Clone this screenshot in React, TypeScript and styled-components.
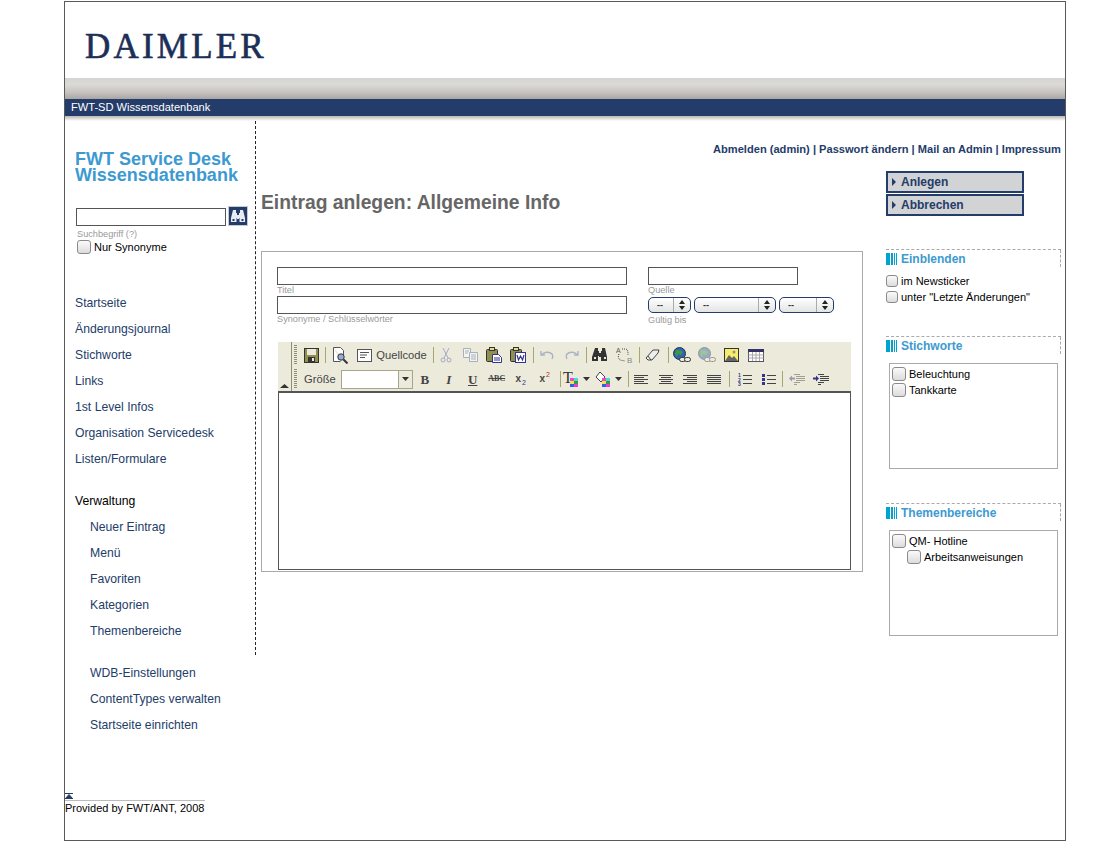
import styled, { createGlobalStyle } from 'styled-components';

const GlobalStyle = createGlobalStyle`
  html, body {
    margin: 0;
    padding: 0;
    background: #fff;
    font-family: "Liberation Sans", Arial, sans-serif;
  }
`;

const Frame = styled.div`
  box-sizing: border-box;
  width: 1002px;
  height: 840px;
  margin: 1px 0 0 64px;
  border: 1px solid #5a5a5a;
`;

const LogoBar = styled.div`
  height: 76px;
  padding: 0 0 0 20px;
  display: flex;
  align-items: center;
`;

const Logo = styled.div`
  font-family: "Liberation Serif", serif;
  font-size: 35px;
  letter-spacing: 3.2px;
  color: #1b2f57;
  line-height: 1;
  padding-top: 13px;
  -webkit-text-stroke: 0.6px #1b2f57;
`;

const GreyBand = styled.div`
  height: 21px;
  background: linear-gradient(#d6d4d0 0, #dcdad7 30%, #c6c3bf 70%, #a8a5a2 100%);
`;

const TitleBand = styled.div`
  height: 17px;
  padding-left: 6px;
  background: #243c69;
  color: #fff;
  font-size: 11.1px;
  line-height: 17px;
`;

const BandShadow = styled.div`
  height: 5px;
  background: linear-gradient(#b9b7b4, #fff);
`;

const Content = styled.div`
  display: flex;
  height: 672px;
`;

const Sidebar = styled.div`
  box-sizing: border-box;
  flex: none;
  width: 191px;
  height: 534px;
  border-right: 1px dashed #222;
  padding: 30px 0 0 10px;
`;

const Brand = styled.div`
  color: #3c9ad0;
  font-size: 18px;
  font-weight: bold;
  line-height: 16px;
`;

const SearchRow = styled.div`
  display: flex;
  align-items: flex-end;
  gap: 2px;
  margin: 23px 0 0 1px;
`;

const TextBox = styled.div<{ $w: number }>`
  box-sizing: border-box;
  width: ${p => p.$w}px;
  height: 18px;
  border: 1px solid #555;
  background: #fff;
`;

const SearchButton = styled.div`
  box-sizing: border-box;
  width: 20px;
  height: 20px;
  background: #243c69;
  border: 1px solid #c4c9d6;
  display: flex;
  align-items: center;
  justify-content: center;
`;

const Hint = styled.div`
  color: #9a9a9a;
  font-size: 9.2px;
  line-height: 11px;
`;

const SearchHint = styled(Hint)`
  margin: 3px 0 0 2px;
`;

const CheckRow = styled.div<{ $indent?: number }>`
  display: flex;
  align-items: center;
  gap: 3px;
  height: 16px;
  color: #000;
  font-size: 11px;
  margin-left: ${p => p.$indent ?? 0}px;
`;

const SideCheck = styled(CheckRow)`
  margin: -1px 0 0 2px;
`;

const Check = styled.span<{ $size?: number }>`
  box-sizing: border-box;
  flex: none;
  width: ${p => p.$size ?? 14}px;
  height: ${p => p.$size ?? 14}px;
  border: 1px solid #8a8a8a;
  border-radius: 3px;
  background: linear-gradient(#fafafa, #dcdcdc);
`;

const NavList = styled.div`
  margin-top: 35px;
  display: flex;
  flex-direction: column;
`;

const NavLink = styled.div<{ $sub?: boolean; $gap?: number; $black?: boolean }>`
  height: 26px;
  line-height: 26px;
  font-size: 12.2px;
  white-space: nowrap;
  color: ${p => (p.$black ? '#000' : '#243c69')};
  padding-left: ${p => (p.$sub ? 15 : 0)}px;
  margin-top: ${p => p.$gap ?? 0}px;
`;

const Main = styled.div`
  flex: 1;
  display: flex;
  flex-direction: column;
  padding: 0 4px 0 5px;
  min-width: 0;
`;

const TopLinks = styled.div`
  margin-top: 21px;
  height: 14px;
  text-align: right;
  color: #243c69;
  font-size: 11.1px;
  font-weight: bold;
  line-height: 14px;
  white-space: nowrap;
`;

const Columns = styled.div`
  display: flex;
  gap: 23px;
`;

const Center = styled.div`
  flex: none;
  width: 602px;
`;

const Heading = styled.h1`
  margin: 36px 0 0;
  height: 59px;
  color: #666;
  font-size: 19.3px;
  font-weight: bold;
  line-height: 22px;
  white-space: nowrap;
`;

const Card = styled.div`
  box-sizing: border-box;
  height: 321px;
  border: 1px solid #aaa;
  padding: 15px 11px 0 15px;
`;

const FormGrid = styled.div`
  display: flex;
  gap: 21px;
`;

const FormColumn = styled.div<{ $w: number }>`
  flex: none;
  width: ${p => p.$w}px;
`;

const FieldHint = styled(Hint)<{ $top?: number }>`
  height: 11px;
  line-height: 10px;
  margin-top: ${p => p.$top ?? 0}px;
`;

const SelectRow = styled.div`
  display: flex;
  gap: 3px;
  margin-top: 1px;
  height: 16px;
`;

const Select = styled.div<{ $w: number }>`
  box-sizing: border-box;
  width: ${p => p.$w}px;
  height: 16px;
  border: 1px solid #243c69;
  border-radius: 5px;
  background: linear-gradient(#fff, #e4e4e4);
  display: flex;
  align-items: center;
  font-size: 9px;
  font-weight: bold;
  color: #333;
`;

const SelectValue = styled.span`
  flex: 1;
  padding-left: 8px;
  line-height: 14px;
`;

const SelectArrows = styled.span`
  width: 16px;
  height: 14px;
  border-left: 1px solid #aaa;
  display: flex;
  align-items: center;
  justify-content: center;
`;

const Editor = styled.div`
  box-sizing: border-box;
  margin: 16px 0 0 1px;
  width: 573px;
  height: 228px;
  display: flex;
  flex-direction: column;
`;

const Toolbar = styled.div`
  flex: none;
  height: 49px;
  background: #ecebdb;
  display: flex;
`;

const Collapse = styled.div`
  flex: none;
  width: 13px;
  border-right: 1px solid #8f8f78;
  display: flex;
  align-items: flex-end;
  justify-content: center;
  padding-bottom: 3px;
  box-sizing: content-box;
`;

const ToolRows = styled.div`
  flex: 1;
  padding: 1px 0 0 2px;
`;

const ToolRow = styled.div`
  height: 24px;
  display: flex;
  align-items: center;
`;

const Grip = styled.span`
  flex: none;
  width: 3px;
  height: 20px;
  margin-right: 3px;
  background: repeating-linear-gradient(#8f8f78 0 1px, transparent 1px 2px);
`;

const Sep = styled.span`
  flex: none;
  width: 1px;
  height: 16px;
  margin-left: 3px;
  background: #a6a66f;
`;

const Tool = styled.span<{ $w?: number }>`
  flex: none;
  width: ${p => p.$w ?? 24}px;
  height: 20px;
  display: flex;
  align-items: center;
  justify-content: center;
  gap: 4px;
  color: #444;
  font-size: 11.2px;
`;

const ToolLabel = styled.span`
  color: #444;
  font-size: 11.2px;
  margin: 0 5px 0 4px;
  white-space: nowrap;
`;

const SizeCombo = styled.span`
  box-sizing: border-box;
  flex: none;
  width: 72px;
  height: 19px;
  border: 1px solid #a6a68c;
  background: #fff;
  display: flex;
  justify-content: flex-end;
`;

const SizeArrow = styled.span`
  width: 13px;
  background: #ecebdb;
  border-left: 1px solid #a6a68c;
  display: flex;
  align-items: center;
  justify-content: center;
`;

const Glyph = styled.span<{ $serif?: boolean; $italic?: boolean; $under?: boolean; $strike?: boolean; $size?: number }>`
  font-family: ${p => (p.$serif ? '"Liberation Serif", serif' : '"Liberation Sans", sans-serif')};
  font-style: ${p => (p.$italic ? 'italic' : 'normal')};
  font-weight: bold;
  font-size: ${p => p.$size ?? 12}px;
  color: #444;
  text-decoration: ${p => (p.$under ? 'underline' : p.$strike ? 'line-through' : 'none')};
  line-height: 1;
`;

const Script = styled.sup<{ $color: string; $low?: boolean }>`
  font-size: 7px;
  font-weight: normal;
  color: ${p => p.$color};
  line-height: 0;
  margin-left: 1px;
  vertical-align: ${p => (p.$low ? '-3px' : '5px')};
`;

const EditArea = styled.div`
  flex: 1;
  border: 1px solid #555;
  border-top-width: 2px;
  background: #fff;
`;

const Aside = styled.div`
  flex: 1;
  min-width: 0;
`;

const ActionList = styled.div`
  margin-top: 15px;
  display: flex;
  flex-direction: column;
  gap: 1px;
  height: 78px;
`;

const ActionButton = styled.div`
  box-sizing: border-box;
  width: 138px;
  height: 22px;
  border: 2px solid #243c69;
  background: #d2d3d5;
  color: #243c69;
  font-size: 12px;
  font-weight: bold;
  line-height: 18px;
  padding-left: 4px;
  display: flex;
  align-items: center;
  gap: 5px;
`;

const Caret = styled.span`
  width: 0;
  height: 0;
  border-style: solid;
  border-width: 4px 0 4px 4px;
  border-color: transparent transparent transparent #243c69;
`;

const Panel = styled.div<{ $h: number }>`
  height: ${p => p.$h}px;
`;

const PanelHead = styled.div`
  position: relative;
  height: 18px;
  border-top: 1px dashed #aaa;
  display: flex;
  align-items: center;
  gap: 3px;
  color: #3c9ad0;
  font-size: 12px;
  font-weight: bold;

  &:after {
    content: '';
    position: absolute;
    right: 0;
    top: 0;
    height: 17px;
    border-right: 1px dashed #aaa;
  }
`;

const Stripes = styled.span`
  width: 12px;
  height: 12px;
  background: linear-gradient(90deg, #00a3d0 0 4px, #fff 4px 5px, #00a3d0 5px 7px, #fff 7px 8px, #00a3d0 8px 9px, #fff 9px 10px, #00a3d0 10px 11px, #fff 11px);
`;

const CheckList = styled.div`
  margin-top: 5px;
`;

const TreeBox = styled.div`
  box-sizing: border-box;
  margin: 8px 0 0 3px;
  width: 169px;
  height: 106px;
  border: 1px solid #aaa;
  padding: 2px 0 0 2px;
`;

const Footer = styled.div`
  width: 140px;
`;

const TopArrow = styled.div`
  height: 7px;
  border-bottom: 1px solid #bbb;
  display: flex;
`;

const FooterText = styled.div`
  font-size: 11px;
  line-height: 15px;
  color: #000;
  white-space: nowrap;
`;

const BinocularsIcon = ({ color = '#e8ebf2' }: { color?: string }) => (
  <svg width="16" height="14" viewBox="0 0 16 14">
    <path fill={color} d="M3 1h3v3h1v2h2V4h1V1h3l2 8v4h-5.500V9H9v1H7V9H6.500v4H1V9z" />
    <path fill="#243c69" d="M2.500 10h2v2h-2zM11.500 10h2v2h-2z" />
  </svg>
);

const SaveIcon = () => (
  <svg width="15" height="15" viewBox="0 0 15 15">
    <rect x="0.5" y="0.5" width="14" height="14" fill="#8f8f50" stroke="#333" />
    <rect x="3" y="1" width="9" height="6" fill="#ecebdb" />
    <rect x="4" y="9" width="7" height="5" fill="#333" />
    <rect x="8" y="10" width="2" height="3" fill="#ecebdb" />
  </svg>
);

const PreviewIcon = () => (
  <svg width="17" height="17" viewBox="0 0 17 17">
    <path d="M1.500.5h7l3 3v8M1.500.5v14h7" fill="#fff" stroke="#555" />
    <circle cx="9" cy="10" r="3.200" fill="#9ad" stroke="#333" />
    <path d="M11.500 12.500l4 4" stroke="#333" strokeWidth="2" />
  </svg>
);

const SourceIcon = () => (
  <svg width="15" height="13" viewBox="0 0 15 13">
    <rect x="0.5" y="0.5" width="14" height="12" fill="#fff" stroke="#555" />
    <path d="M3 3.500h9M3 6h7M3 8.500h5" stroke="#555" />
  </svg>
);

const CutIcon = () => (
  <svg width="12" height="15" viewBox="0 0 12 15" fill="none" stroke="#a3a9c4">
    <path d="M3 0l5 10M9 0L4 10" />
    <circle cx="3" cy="12" r="2" />
    <circle cx="9" cy="12" r="2" />
  </svg>
);

const CopyIcon = () => (
  <svg width="15" height="14" viewBox="0 0 15 14" stroke="#a9aebc" fill="#f4f4ee">
    <path d="M.5.5h7v9h-7z" />
    <path d="M6.500 4.500h8v9h-8z" />
    <path d="M8 7h5M8 9h5M8 11h5M2 3h4M2 5h3" />
  </svg>
);

const PasteIcon = ({ word }: { word?: boolean }) => (
  <svg width="16" height="16" viewBox="0 0 16 16">
    <rect x="0.5" y="2.500" width="11" height="12" rx="1" fill="#8f8f50" stroke="#333" />
    <rect x="3.500" y="0.500" width="5" height="3" fill="#e5d98a" stroke="#333" />
    {word ? (
      <>
        <rect x="5.500" y="5.500" width="10" height="10" fill="#fff" stroke="#34348c" />
        <path d="M7 8l1.500 5 2-4 2 4L14 8" fill="none" stroke="#34348c" strokeWidth="1.200" />
      </>
    ) : (
      <>
        <path d="M6.500 7.500h6l3 3v5h-9z" fill="#fff" stroke="#34348c" />
        <path d="M8 11h6M8 13h6" stroke="#34348c" />
      </>
    )}
  </svg>
);

const UndoIcon = ({ flip }: { flip?: boolean }) => (
  <svg width="14" height="10" viewBox="0 0 14 10" fill="none" stroke="#a9b3c4" strokeWidth="1.400" style={flip ? { transform: 'scaleX(-1)' } : undefined}>
    <path d="M1 1v4h4" />
    <path d="M1.500 5C4 2 9 1 12 4c1 1.500 1 3 0 5" />
  </svg>
);

const FindIcon = () => (
  <svg width="16" height="14" viewBox="0 0 16 14">
    <path fill="#333" d="M3 0h3v3h1v2h2V3h1V0h3l2 9v4h-6V8H9v1H7V8H6v5H0V9z" />
    <path fill="#ecebdb" d="M2 9h2v2H2zM12 9h2v2h-2z" />
  </svg>
);

const ReplaceIcon = () => (
  <svg width="17" height="17" viewBox="0 0 17 17" fill="none" overflow="visible">
    <path d="M3 7c-1 2-1 4 1 6l5 1M6 2h4c2 1 2 3 2 6" stroke="#444" strokeDasharray="1 1" />
    <text x="0" y="6" fontSize="7" fill="#555" fontFamily="Liberation Sans">A</text>
    <text x="11" y="16" fontSize="8" fill="#888" fontFamily="Liberation Sans">B</text>
  </svg>
);

const EraserIcon = () => (
  <svg width="15" height="12" viewBox="0 0 15 12">
    <path d="M1 9l7-8h6l-1 3-6 7H3z" fill="#eee" stroke="#444" />
    <path d="M3 7l3 4" stroke="#444" />
  </svg>
);

const LinkIcon = ({ off }: { off?: boolean }) => (
  <svg width="18" height="16" viewBox="0 0 18 16" opacity={off ? 0.45 : 1}>
    <circle cx="6.500" cy="6.500" r="6" fill="#2f62b8" stroke="#234" />
    <path d="M3 3c2 0 3 1 4 0l3 2-2 3-3-1-1 3-2-3z" fill="#3c9a3c" />
    <g fill="#ecebdb" stroke="#333">
      <rect x="6.500" y="10.500" width="6" height="4" rx="2" />
      <rect x="11.500" y="10.500" width="6" height="4" rx="2" />
    </g>
  </svg>
);

const ImageIcon = () => (
  <svg width="15" height="14" viewBox="0 0 15 14">
    <rect x="0.5" y="0.5" width="14" height="13" fill="#f4ee6c" stroke="#333" />
    <circle cx="10" cy="4" r="1.500" fill="#a88" />
    <path d="M1 13l4-6 3 3 2-2 4 5z" fill="#666" />
  </svg>
);

const TableIcon = () => (
  <svg width="16" height="13" viewBox="0 0 16 13">
    <rect x="0.5" y="0.5" width="15" height="12" fill="#fff" stroke="#556" />
    <rect x="0" y="0" width="16" height="3" fill="#33336a" />
    <path d="M0.500 6h15M0.500 9h15M4.500 3v9M8 3v9M11.500 3v9" stroke="#aaa" />
  </svg>
);

const ArrowDown = ({ color = '#333' }: { color?: string }) => (
  <svg width="7" height="4" viewBox="0 0 7 4">
    <path d="M0 0h7L3.500 4z" fill={color} />
  </svg>
);

const Swatches = ({ x }: { x: number }) => (
  <>
    <rect x={x} y="7" width="4" height="3" fill="#e84ad8" />
    <rect x={x + 4} y="7" width="4" height="3" fill="#4ad8e8" />
    <rect x={x} y="10" width="4" height="3" fill="#e8e84a" />
    <rect x={x + 4} y="10" width="4" height="3" fill="#3c9a3c" />
    <rect x={x} y="13" width="4" height="3" fill="#3c5ae8" />
    <rect x={x + 4} y="13" width="4" height="3" fill="#e83cd8" />
  </>
);

const TextColorIcon = () => (
  <svg width="16" height="16" viewBox="0 0 16 16" overflow="visible">
    <text x="0" y="12" fontSize="16" fontFamily="Liberation Serif" fill="#333">T</text>
    <Swatches x={7} />
  </svg>
);

const BackColorIcon = () => (
  <svg width="16" height="16" viewBox="0 0 16 16">
    <path d="M5 1l5 5-4 5-5-5z" fill="#fff" stroke="#444" />
    <Swatches x={7} />
  </svg>
);

const AlignIcon = ({ mode }: { mode: 'left' | 'center' | 'right' | 'full' }) => {
  const rows = [14, 10, 14, 10, 14];
  return (
    <svg width="14" height="11" viewBox="0 0 14 11" stroke="#444">
      {rows.map((w, i) => {
        const width = mode === 'full' ? 14 : w;
        const x = mode === 'left' || mode === 'full' ? 0 : mode === 'center' ? (14 - width) / 2 : 14 - width;
        return <path key={i} d={`M${x} ${i * 2 + 1.5}h${width}`} />;
      })}
    </svg>
  );
};

const ListIcon = ({ ordered }: { ordered?: boolean }) => (
  <svg width="14" height="13" viewBox="0 0 14 13" overflow="visible">
    <path d="M5 2.500h9M5 6.500h9M5 10.500h9" stroke="#444" />
    {ordered ? (
      <g fontSize="5" fontWeight="bold" fontFamily="Liberation Sans" fill="#34348c">
        <text x="0" y="4">1</text>
        <text x="0" y="8.500">2</text>
        <text x="0" y="13">3</text>
      </g>
    ) : (
      <path d="M0 1h3v3H0zM0 5h3v3H0zM0 9h3v3H0z" fill="#34348c" />
    )}
  </svg>
);

const IndentIcon = ({ out }: { out?: boolean }) => (
  <svg width="16" height="13" viewBox="0 0 16 13" opacity={out ? 0.45 : 1}>
    <path d="M5 1.500h6M7 3.500h9M7 5.500h9M7 7.500h9M5 9.500h6M5 11.500h3" stroke="#444" />
    {out ? <path d="M0 5.500l3-3v2h3v2H3v2z" fill="#34348c" /> : <path d="M6 5.500l-3-3v2H0v2h3v2z" fill="#34348c" />}
  </svg>
);

const SpinArrows = () => (
  <svg width="6" height="10" viewBox="0 0 6 10">
    <path d="M3 0l3 4H0zM3 10L0 6h6z" fill="#222" />
  </svg>
);

const DateSelect = ({ w }: { w: number }) => (
  <Select $w={w}>
    <SelectValue>--</SelectValue>
    <SelectArrows>
      <SpinArrows />
    </SelectArrows>
  </Select>
);

const EditorToolbar = () => (
  <Toolbar>
    <Collapse>
      <svg width="9" height="4" viewBox="0 0 9 4">
        <path d="M4.500 0L9 4H0z" fill="#333" />
      </svg>
    </Collapse>
    <ToolRows>
      <ToolRow>
        <Grip />
        <Tool $w={22}><SaveIcon /></Tool>
        <Sep />
        <Tool $w={28}><PreviewIcon /></Tool>
        <Tool $w={76}><SourceIcon /> Quellcode</Tool>
        <Sep />
        <Tool><CutIcon /></Tool>
        <Tool><CopyIcon /></Tool>
        <Tool><PasteIcon /></Tool>
        <Tool><PasteIcon word /></Tool>
        <Sep />
        <Tool $w={26}><UndoIcon /></Tool>
        <Tool $w={23}><UndoIcon flip /></Tool>
        <Sep />
        <Tool $w={26}><FindIcon /></Tool>
        <Tool $w={23}><ReplaceIcon /></Tool>
        <Sep />
        <Tool $w={25}><EraserIcon /></Tool>
        <Sep />
        <Tool $w={26}><LinkIcon /></Tool>
        <Tool><LinkIcon off /></Tool>
        <Tool><ImageIcon /></Tool>
        <Tool $w={26}><TableIcon /></Tool>
      </ToolRow>
      <ToolRow>
        <Grip />
        <ToolLabel>Größe</ToolLabel>
        <SizeCombo>
          <SizeArrow><ArrowDown /></SizeArrow>
        </SizeCombo>
        <Tool><Glyph $serif $size={13}>B</Glyph></Tool>
        <Tool><Glyph $serif $italic $size={13}>I</Glyph></Tool>
        <Tool><Glyph $serif $under $size={13}>U</Glyph></Tool>
        <Tool><Glyph $serif $strike $size={8}>ABC</Glyph></Tool>
        <Tool><Glyph $size={10}>x<Script $color="#34348c" $low>2</Script></Glyph></Tool>
        <Tool><Glyph $size={10}>x<Script $color="#c03030">2</Script></Glyph></Tool>
        <Sep />
        <Tool $w={32}><TextColorIcon /><ArrowDown /></Tool>
        <Tool $w={32}><BackColorIcon /><ArrowDown /></Tool>
        <Sep />
        <Tool $w={25}><AlignIcon mode="left" /></Tool>
        <Tool><AlignIcon mode="center" /></Tool>
        <Tool><AlignIcon mode="right" /></Tool>
        <Tool><AlignIcon mode="full" /></Tool>
        <Sep />
        <Tool $w={30}><ListIcon ordered /></Tool>
        <Tool $w={19}><ListIcon /></Tool>
        <Sep />
        <Tool $w={28}><IndentIcon out /></Tool>
        <Tool $w={20}><IndentIcon /></Tool>
      </ToolRow>
    </ToolRows>
  </Toolbar>
);

const App = () => {
  return (
    <>
      <GlobalStyle />
      <Frame>
        <LogoBar>
          <Logo>DAIMLER</Logo>
        </LogoBar>
        <GreyBand />
        <TitleBand>FWT-SD Wissensdatenbank</TitleBand>
        <BandShadow />
        <Content>
          <Sidebar>
            <Brand>
              FWT Service Desk
              <br />
              Wissensdatenbank
            </Brand>
            <SearchRow>
              <TextBox $w={150} />
              <SearchButton>
                <BinocularsIcon />
              </SearchButton>
            </SearchRow>
            <SearchHint>Suchbegriff (?)</SearchHint>
            <SideCheck>
              <Check />
              Nur Synonyme
            </SideCheck>
            <NavList>
              <NavLink>Startseite</NavLink>
              <NavLink>Änderungsjournal</NavLink>
              <NavLink>Stichworte</NavLink>
              <NavLink>Links</NavLink>
              <NavLink>1st Level Infos</NavLink>
              <NavLink>Organisation Servicedesk</NavLink>
              <NavLink>Listen/Formulare</NavLink>
              <NavLink $gap={16} $black>Verwaltung</NavLink>
              <NavLink $sub>Neuer Eintrag</NavLink>
              <NavLink $sub>Menü</NavLink>
              <NavLink $sub>Favoriten</NavLink>
              <NavLink $sub>Kategorien</NavLink>
              <NavLink $sub>Themenbereiche</NavLink>
              <NavLink $sub $gap={16}>WDB-Einstellungen</NavLink>
              <NavLink $sub>ContentTypes verwalten</NavLink>
              <NavLink $sub>Startseite einrichten</NavLink>
            </NavList>
          </Sidebar>
          <Main>
            <TopLinks>Abmelden (admin) | Passwort ändern | Mail an Admin | Impressum</TopLinks>
            <Columns>
              <Center>
                <Heading>Eintrag anlegen: Allgemeine Info</Heading>
                <Card>
                  <FormGrid>
                    <FormColumn $w={350}>
                      <TextBox $w={350} />
                      <FieldHint>Titel</FieldHint>
                      <TextBox $w={350} />
                      <FieldHint>Synonyme / Schlüsselwörter</FieldHint>
                    </FormColumn>
                    <FormColumn $w={190}>
                      <TextBox $w={150} />
                      <FieldHint>Quelle</FieldHint>
                      <SelectRow>
                        <DateSelect w={43} />
                        <DateSelect w={82} />
                        <DateSelect w={55} />
                      </SelectRow>
                      <FieldHint $top={2}>Gültig bis</FieldHint>
                    </FormColumn>
                  </FormGrid>
                  <Editor>
                    <EditorToolbar />
                    <EditArea />
                  </Editor>
                </Card>
              </Center>
              <Aside>
                <ActionList>
                  <ActionButton><Caret />Anlegen</ActionButton>
                  <ActionButton><Caret />Abbrechen</ActionButton>
                </ActionList>
                <Panel $h={87}>
                  <PanelHead><Stripes />Einblenden</PanelHead>
                  <CheckList>
                    <CheckRow><Check $size={12} />im Newsticker</CheckRow>
                    <CheckRow><Check $size={12} />unter "Letzte Änderungen"</CheckRow>
                  </CheckList>
                </Panel>
                <Panel $h={167}>
                  <PanelHead><Stripes />Stichworte</PanelHead>
                  <TreeBox>
                    <CheckRow><Check />Beleuchtung</CheckRow>
                    <CheckRow><Check />Tankkarte</CheckRow>
                  </TreeBox>
                </Panel>
                <Panel $h={140}>
                  <PanelHead><Stripes />Themenbereiche</PanelHead>
                  <TreeBox>
                    <CheckRow><Check />QM- Hotline</CheckRow>
                    <CheckRow $indent={15}><Check />Arbeitsanweisungen</CheckRow>
                  </TreeBox>
                </Panel>
              </Aside>
            </Columns>
          </Main>
        </Content>
        <Footer>
          <TopArrow>
            <svg width="8" height="6" viewBox="0 0 8 6">
              <path d="M0 .5h8M4 1.500L8 6H0z" stroke="#243c69" fill="#243c69" strokeWidth="1" />
            </svg>
          </TopArrow>
          <FooterText>Provided by FWT/ANT, 2008</FooterText>
        </Footer>
      </Frame>
    </>
  );
};

export default App;
